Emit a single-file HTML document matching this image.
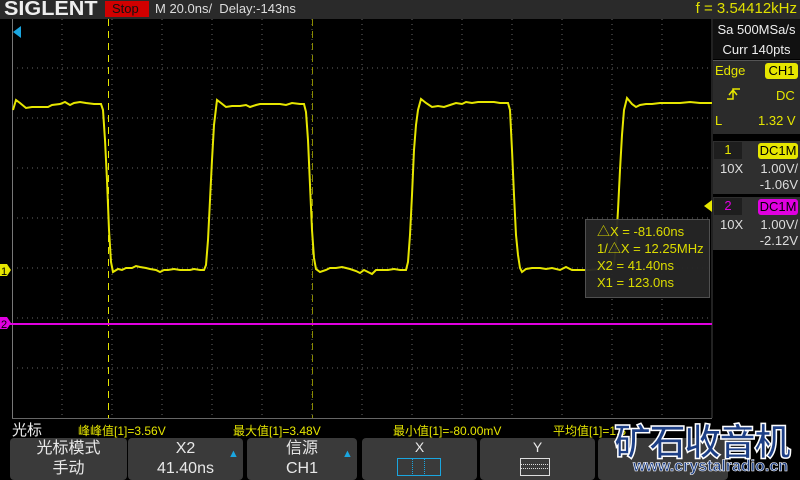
<!DOCTYPE html>
<html><head><meta charset="utf-8"><style>
*{margin:0;padding:0;box-sizing:border-box}
body{width:800px;height:480px;background:#000;overflow:hidden;position:relative;font-family:"Liberation Sans","Noto Sans CJK SC",sans-serif;color:#ddd}
.abs{position:absolute}
.hdr{left:0;top:0;width:800px;height:19px;background:#2a2a2a}
.rp{background:#2b2b2b}
.btn{position:absolute;top:438px;height:42px;background:#3a3a3a;border-radius:4px;color:#e8e8e8;text-align:center;font-size:16px;line-height:20px;padding-top:1px}
.y{color:#e6e600}
</style></head><body>
<div class="abs hdr"></div>
<div class="abs" style="left:4px;top:-2px;font:bold 20px 'Liberation Sans',sans-serif;color:#eee;transform:scaleX(1.08);transform-origin:left">SIGLENT</div>
<div class="abs" style="left:105px;top:1px;width:44px;height:16px;background:#d00000;color:#111;font-size:13px;line-height:16px;padding-left:7px">Stop</div>
<div class="abs" style="left:155px;top:1px;font-size:13px;color:#ddd">M 20.0ns/&nbsp; Delay:-143ns</div>
<div class="abs y" style="right:3px;top:0px;font-size:15px;color:#e0e000">f = 3.54412kHz</div>

<svg class="abs" style="left:0;top:0" width="800" height="480">
<g stroke="#666" stroke-dasharray="1 4" stroke-width="1">
<line x1="62" y1="19" x2="62" y2="418"/><line x1="112" y1="19" x2="112" y2="418"/><line x1="162" y1="19" x2="162" y2="418"/><line x1="212" y1="19" x2="212" y2="418"/><line x1="262" y1="19" x2="262" y2="418"/><line x1="312" y1="19" x2="312" y2="418"/><line x1="362" y1="19" x2="362" y2="418"/><line x1="412" y1="19" x2="412" y2="418"/><line x1="462" y1="19" x2="462" y2="418"/><line x1="512" y1="19" x2="512" y2="418"/><line x1="562" y1="19" x2="562" y2="418"/><line x1="612" y1="19" x2="612" y2="418"/><line x1="662" y1="19" x2="662" y2="418"/>
<line x1="12" y1="68" x2="712" y2="68"/><line x1="12" y1="118" x2="712" y2="118"/><line x1="12" y1="168" x2="712" y2="168"/><line x1="12" y1="218" x2="712" y2="218"/><line x1="12" y1="268" x2="712" y2="268"/><line x1="12" y1="318" x2="712" y2="318"/><line x1="12" y1="368" x2="712" y2="368"/>
</g>
<line x1="12.5" y1="19" x2="12.5" y2="418" stroke="#777"/>
<line x1="712" y1="19" x2="712" y2="418" stroke="#444"/>
<line x1="12" y1="418.5" x2="712" y2="418.5" stroke="#666"/>
<line x1="108.5" y1="19" x2="108.5" y2="418" stroke="#e6e600" stroke-dasharray="7 5"/>
<line x1="312.5" y1="19" x2="312.5" y2="418" stroke="#8a8a00" stroke-dasharray="7 5"/>
<line x1="0" y1="324" x2="712" y2="324" stroke="#e000e0" stroke-width="2"/>
<polyline fill="none" stroke="#e6e600" stroke-width="2" points="13,110 16,100 20,103 26,108 32,107 48,107 52,105 60,104 65,102 70,105 74,103 80,102 86,103 94,104 101,104 103,110 105,140 107,180 109,230 111,262 113,272 118,269 122,270 126,268 132,268 136,266 140,267 146,268 150,269 156,270 160,272 164,270 168,270 174,269 180,270 190,270 194,269 200,270 204,270 206,265 208,240 210,200 212,160 214,125 217,100 221,103 226,107 232,106 240,106 246,105 250,107 256,105 260,104 266,104 272,104 280,104 286,105 292,103 300,104 304,104 306,112 308,140 310,185 312,230 314,258 316,269 320,272 326,270 330,268 336,268 342,267 346,268 350,269 356,271 360,273 364,270 368,272 372,274 376,270 380,270 388,270 394,269 400,270 406,270 408,262 410,235 412,195 414,150 416,125 418,110 421,99 426,103 432,107 438,106 444,107 450,105 456,103 462,104 466,102 472,103 478,102 486,102 494,102 500,103 508,103 510,110 512,150 514,195 516,235 518,255 520,268 522,272 526,269 532,268 540,268 546,269 552,268 560,270 566,267 572,270 580,270 590,270 600,269 610,268 614,265 616,245 618,210 620,170 622,135 624,110 627,98 632,104 636,107 640,105 646,104 652,104 660,103 670,103 680,103 690,102 700,103 712,103"/>
<polygon points="13,32 21,26 21,38" fill="#1aa6e0"/>
<polygon points="0,264 7,264 11,270 7,276 0,276" fill="#e6e600"/>
<text x="1" y="275" font-size="11" fill="#000" font-family="Liberation Sans">1</text>
<polygon points="0,317 7,317 11,323 7,329 0,329" fill="#e000e0"/>
<text x="1" y="328" font-size="11" fill="#000" font-family="Liberation Sans">2</text>
<polygon points="712,200 704,206 712,212" fill="#e6e600"/>
</svg>

<div class="abs" style="left:585px;top:219px;width:125px;height:79px;background:#262626;border:1px solid #555;color:#e6e600;font-size:13px;line-height:17px;padding:3px 0 0 11px;opacity:0.95">△X = -81.60ns<br>1/△X = 12.25MHz<br>X2 = 41.40ns<br>X1 = 123.0ns</div>

<div class="abs" style="left:713px;top:19px;width:87px;height:40px;background:#111;color:#eee;font-size:13px;line-height:20px;text-align:center;padding-top:1px">Sa 500MSa/s<br>Curr 140pts</div>
<div class="abs rp" style="left:713px;top:60px;width:87px;height:74px;border-top:1px solid #555"></div>
<div class="abs y" style="left:715px;top:63px;font-size:13px">Edge</div>
<div class="abs" style="left:765px;top:63px;width:33px;height:16px;background:#e6e600;color:#000;font-size:13px;line-height:16px;text-align:center;border-radius:3px">CH1</div>
<svg class="abs" style="left:726px;top:86px" width="16" height="16"><path d="M1,13 H7 V3 H14 M3,9 L7,4 L11,9" stroke="#e6e600" stroke-width="1.5" fill="none"/></svg>
<div class="abs y" style="left:776px;top:88px;font-size:13px">DC</div>
<div class="abs y" style="left:715px;top:113px;font-size:13px">L</div>
<div class="abs y" style="left:758px;top:113px;font-size:13px">1.32 V</div>

<div class="abs" style="left:713px;top:141px;width:87px;height:53px;background:#2f2f2f"></div>
<div class="abs" style="left:714px;top:142px;width:28px;height:17px;background:#1e1e1e;color:#e6e600;font-size:13px;text-align:center">1</div>
<div class="abs" style="left:758px;top:143px;width:40px;height:16px;background:#e6e600;color:#000;font-size:13px;line-height:16px;text-align:center;border-radius:3px">DC1M</div>
<div class="abs" style="left:720px;top:161px;font-size:13px;color:#ddd">10X</div>
<div class="abs" style="left:758px;top:161px;font-size:13px;color:#ddd;line-height:16px;text-align:right;width:40px">1.00V/<br>-1.06V</div>

<div class="abs" style="left:713px;top:197px;width:87px;height:53px;background:#2f2f2f"></div>
<div class="abs" style="left:714px;top:198px;width:28px;height:17px;background:#1e1e1e;color:#e000e0;font-size:13px;text-align:center">2</div>
<div class="abs" style="left:758px;top:199px;width:40px;height:16px;background:#e000e0;color:#000;font-size:13px;line-height:16px;text-align:center;border-radius:3px">DC1M</div>
<div class="abs" style="left:720px;top:217px;font-size:13px;color:#ddd">10X</div>
<div class="abs" style="left:758px;top:217px;font-size:13px;color:#ddd;line-height:16px;text-align:right;width:40px">1.00V/<br>-2.12V</div>

<div class="abs" style="left:12px;top:419px;font-size:15px;color:#eee">光标</div>
<div class="abs y" style="left:78px;top:422px;font-size:12px">峰峰值[1]=3.56V</div>
<div class="abs y" style="left:233px;top:422px;font-size:12px">最大值[1]=3.48V</div>
<div class="abs y" style="left:393px;top:422px;font-size:12px">最小值[1]=-80.00mV</div>
<div class="abs y" style="left:553px;top:422px;font-size:12px">平均值[1]=1.8</div>

<div class="btn" style="left:10px;width:117px">光标模式<br>手动</div>
<div class="btn" style="left:128px;width:115px">X2<br>41.40ns</div>
<div class="abs" style="left:228px;top:448px;color:#1aa6e0;font-size:11px">▲</div>
<div class="btn" style="left:247px;width:110px">信源<br>CH1</div>
<div class="abs" style="left:342px;top:448px;color:#1aa6e0;font-size:11px">▲</div>
<div class="btn" style="left:362px;width:115px;font-size:14px;line-height:16px">X</div>
<div class="abs" style="left:397px;top:458px;width:44px;height:18px;border:1px solid #1aa6e0"></div>
<div class="abs" style="left:412px;top:458px;width:13px;height:18px;border-left:1px dotted #1aa6e0;border-right:1px dotted #1aa6e0"></div>
<div class="btn" style="left:480px;width:115px;font-size:14px;line-height:16px">Y</div>
<div class="abs" style="left:520px;top:458px;width:30px;height:18px;border:1px solid #ddd"></div>
<div class="abs" style="left:520px;top:464px;width:30px;height:5px;border-top:1px dotted #ddd;border-bottom:1px dotted #ddd"></div>
<div class="btn" style="left:598px;width:130px"></div>

<div class="abs" style="left:614px;top:418px;font:bold 37px 'Noto Sans CJK SC',sans-serif;color:#1d3f86;-webkit-text-stroke:1.5px #fff;letter-spacing:-2px;line-height:42px">矿石收音机</div>
<div class="abs" style="left:633px;top:458px;font:bold 16px 'Liberation Sans',sans-serif;color:#1d3f86;-webkit-text-stroke:0.6px #fff">www.crystalradio.cn</div>
</body></html>
